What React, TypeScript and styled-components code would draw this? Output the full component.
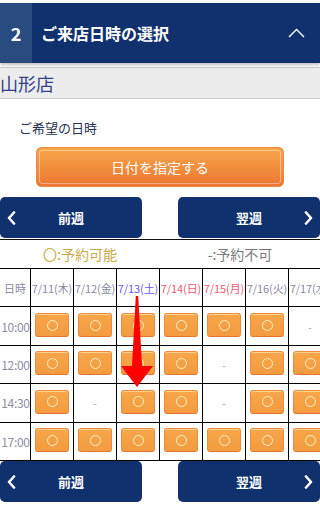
import React from "react";
import styled, { createGlobalStyle } from "styled-components";

const Global = createGlobalStyle`
  html, body { margin: 0; padding: 0; background: #fff; }
  body { font-family: "Noto Sans CJK JP", "Noto Sans", sans-serif; }
  * { box-sizing: border-box; }
`;

const Page = styled.div`
  width: 320px;
  padding-top: 3px;
  position: relative;
  overflow: hidden;
`;

const Header = styled.div`
  display: flex;
  align-items: stretch;
  height: 60px;
  background: #10316e;
  box-shadow: 0 2px 3px rgba(0, 0, 0, 0.25);
  position: relative;
  z-index: 1;
`;

const StepNo = styled.div`
  width: 32px;
  background: #2a4b80;
  color: #fff;
  font-weight: 700;
  font-size: 18px;
  display: flex;
  align-items: center;
  justify-content: center;
`;

const HeaderTitle = styled.div`
  flex: 1;
  color: #fff;
  font-weight: 700;
  font-size: 16px;
  display: flex;
  align-items: center;
  padding-left: 9px;
`;

const HeaderIcon = styled.div`
  width: 34px;
  display: flex;
  align-items: center;
  justify-content: flex-start;
  padding-left: 2px;
`;

const ShopBand = styled.div`
  margin-top: 4px;
  border-top: 1px solid #cbcbcb;
  border-bottom: 1px solid #cbcbcb;
  background: #ececec;
  height: 32px;
  line-height: 30px;
  font-size: 18px;
  color: #33408a;
`;

const Label = styled.div`
  margin-top: 20px;
  padding-left: 19px;
  font-size: 13px;
  line-height: 17px;
  color: #28304e;
`;

const OrangeButton = styled.div`
  margin: 11px 36px 0;
  height: 40px;
  border-radius: 5px;
  background: linear-gradient(#f6a64a, #ec7632);
  border: 1px solid #ef8a3e;
  color: #fff;
  font-size: 14px;
  display: flex;
  align-items: center;
  justify-content: center;
  position: relative;
  &::after {
    content: "";
    position: absolute;
    inset: 2px;
    border: 1px solid rgba(255, 255, 255, 0.4);
    border-radius: 3px;
  }
`;

const NavRow = styled.div<{ $top: number }>`
  margin-top: ${(p) => p.$top}px;
  display: flex;
  justify-content: space-between;
  height: 41px;
`;

const NavButton = styled.div<{ $side: "left" | "right" }>`
  width: 142px;
  height: 41px;
  background: #10316e;
  border-radius: 5px;
  color: #fff;
  font-weight: 700;
  font-size: 13px;
  display: flex;
  align-items: center;
  justify-content: center;
  position: relative;
  svg {
    position: absolute;
    top: 14px;
    ${(p) => (p.$side === "left" ? "left: 7px;" : "right: 7px;")}
  }
`;

const Legend = styled.div`
  margin-top: 1px;
  border-top: 1px solid #111;
  height: 29px;
  display: grid;
  grid-template-columns: 160px 160px;
  align-items: center;
  font-size: 14px;
`;

const LegendItem = styled.div<{ $color: string }>`
  text-align: center;
  color: ${(p) => p.$color};
`;

const Table = styled.div`
  width: 332px;
  display: grid;
  grid-template-columns: 31px repeat(7, 43px);
  border-top: 1px solid #000;
`;

const Cell = styled.div`
  height: 38.4px;
  border-right: 1px solid #000;
  border-bottom: 1px solid #000;
  display: flex;
  align-items: center;
  justify-content: center;
  white-space: nowrap;
  overflow: visible;
`;

const HeadText = styled.span<{ $color: string }>`
  font-size: 11px;
  color: ${(p) => p.$color};
  letter-spacing: -0.1px;
`;

const TimeText = styled.span`
  font-size: 12px;
  color: #8c8ca4;
  letter-spacing: -0.3px;
  margin-left: 1px;
`;

const SlotButton = styled.div`
  width: 34px;
  height: 24px;
  margin-top: -2px;
  border-radius: 3px;
  background: linear-gradient(#f7a649, #f39b40);
  border: 1px solid #ee8a3c;
  border-bottom-color: #e27731;
  box-shadow: inset 0 1px 0 rgba(255, 230, 170, 0.7);
  display: flex;
  align-items: center;
  justify-content: center;
`;

const Ring = styled.span`
  width: 11px;
  height: 11px;
  border-radius: 50%;
  border: 1.2px solid #fff4c6;
`;

const Dash = styled.span`
  font-size: 10px;
  color: #9a9aa8;
`;

const ArrowOverlay = styled.svg`
  position: absolute;
  left: 0;
  top: 0;
  pointer-events: none;
`;

const Chevron = ({ dir }: { dir: "left" | "right" }) => (
  <svg width="9" height="14" viewBox="0 0 9 14">
    <polyline
      points={dir === "left" ? "7,1.5 2,7 7,12.5" : "2,1.5 7,7 2,12.5"}
      fill="none"
      stroke="#fff"
      strokeWidth="2.6"
      strokeLinecap="round"
      strokeLinejoin="round"
    />
  </svg>
);

const dates = [
  { t: "7/11(木)", c: "#8a8aa2" },
  { t: "7/12(金)", c: "#8a8aa2" },
  { t: "7/13(土)", c: "#6a58f0" },
  { t: "7/14(日)", c: "#f0586e" },
  { t: "7/15(月)", c: "#f0586e" },
  { t: "7/16(火)", c: "#8a8aa2" },
  { t: "7/17(水)", c: "#8a8aa2" },
];

const rows: { time: string; slots: boolean[] }[] = [
  { time: "10:00", slots: [true, true, true, true, true, true, false] },
  { time: "12:00", slots: [true, true, true, true, false, true, true] },
  { time: "14:30", slots: [true, false, true, true, false, true, true] },
  { time: "17:00", slots: [true, true, true, true, true, true, true] },
];

export default function App() {
  return (
    <Page>
      <Global />
      <Header>
        <StepNo>2</StepNo>
        <HeaderTitle>ご来店日時の選択</HeaderTitle>
        <HeaderIcon>
          <svg width="17" height="10" viewBox="0 0 17 10">
            <polyline points="1,9 8.5,1.5 16,9" fill="none" stroke="#fff" strokeWidth="1.4" />
          </svg>
        </HeaderIcon>
      </Header>
      <ShopBand>山形店</ShopBand>
      <Label>ご希望の日時</Label>
      <OrangeButton>日付を指定する</OrangeButton>
      <NavRow $top={10}>
        <NavButton $side="left">
          <Chevron dir="left" />
          前週
        </NavButton>
        <NavButton $side="right">
          翌週
          <Chevron dir="right" />
        </NavButton>
      </NavRow>
      <Legend>
        <LegendItem $color="#c9ab45">〇:予約可能</LegendItem>
        <LegendItem $color="#7a7a7a">-:予約不可</LegendItem>
      </Legend>
      <Table>
        <Cell>
          <HeadText $color="#8a8aa2">日時</HeadText>
        </Cell>
        {dates.map((d) => (
          <Cell key={d.t}>
            <HeadText $color={d.c}>{d.t}</HeadText>
          </Cell>
        ))}
        {rows.map((r) => (
          <React.Fragment key={r.time}>
            <Cell>
              <TimeText>{r.time}</TimeText>
            </Cell>
            {r.slots.map((s, i) => (
              <Cell key={i}>
                {s ? (
                  <SlotButton>
                    <Ring />
                  </SlotButton>
                ) : (
                  <Dash>-</Dash>
                )}
              </Cell>
            ))}
          </React.Fragment>
        ))}
      </Table>
      <NavRow $top={0}>
        <NavButton $side="left">
          <Chevron dir="left" />
          前週
        </NavButton>
        <NavButton $side="right">
          翌週
          <Chevron dir="right" />
        </NavButton>
      </NavRow>
      <ArrowOverlay width="320" height="505" viewBox="0 0 320 505">
        <polygon
          points="135.8,296 138.2,296 142,366 153,366 137,387 121,366 132,366"
          fill="#ff0000"
        />
      </ArrowOverlay>
    </Page>
  );
}
